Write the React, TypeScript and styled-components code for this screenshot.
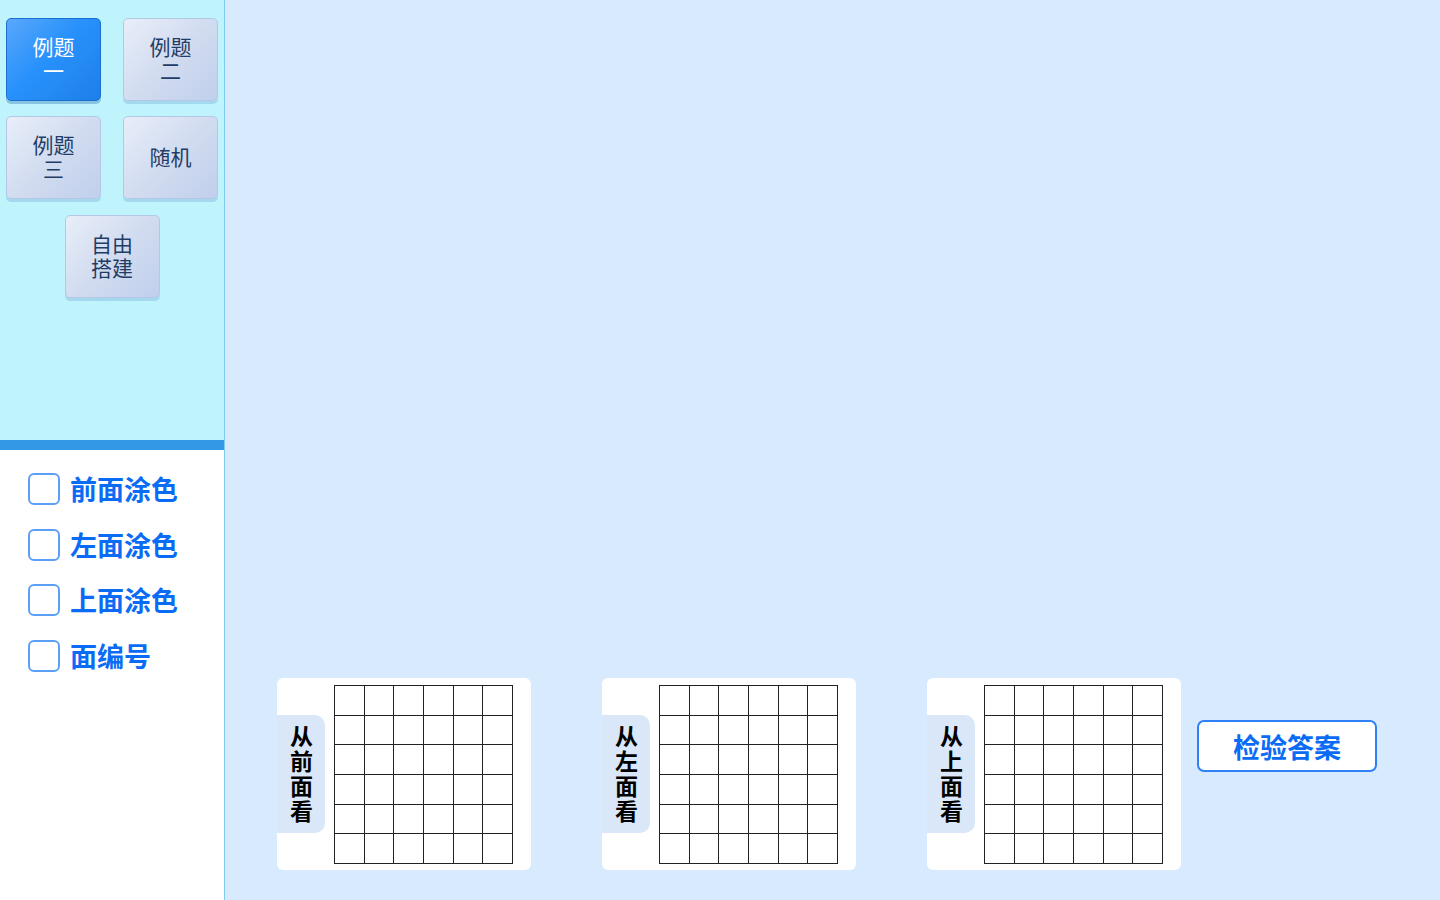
import React from "react";
import styled, { createGlobalStyle, css } from "styled-components";

const Global = createGlobalStyle`
  html, body { margin: 0; padding: 0; }
  body { font-family: "Noto Sans CJK SC", "Noto Sans", sans-serif; }
  #root { height: 100vh; }
`;

const Page = styled.div`
  display: flex;
  width: 1440px;
  height: 900px;
  overflow: hidden;
`;

const Sidebar = styled.aside`
  width: 224px;
  border-right: 1px solid #7fcdee;
  display: flex;
  flex-direction: column;
  background: #ffffff;
`;

const TopPanel = styled.div`
  height: 440px;
  box-sizing: border-box;
  background: #c0f4fc;
  padding: 18px 6px 0;
  display: grid;
  grid-template-columns: 95px 95px;
  column-gap: 22px;
  row-gap: 15px;
  align-content: start;
`;

const Divider = styled.div`
  height: 10px;
  background: #3399e6;
`;

const ExampleButton = styled.button<{ $active?: boolean; $wide?: boolean }>`
  width: 95px;
  height: 83px;
  box-sizing: border-box;
  border-radius: 5px;
  font-family: inherit;
  font-size: 21px;
  line-height: 24px;
  padding: 0 0 3px;
  cursor: pointer;
  display: flex;
  align-items: center;
  justify-content: center;
  text-align: center;
  white-space: pre-line;
  ${(p) =>
    p.$active
      ? css`
          color: #ffffff;
          background: linear-gradient(135deg, #5aa8fb 0%, #2891fb 45%, #1e7fe9 100%);
          border: 1px solid #1a6fd0;
          box-shadow: 0 3px 0 #86c4e2;
        `
      : css`
          color: #1f3d66;
          background: linear-gradient(135deg, #e8eef9 0%, #d2dcf0 50%, #c0cfec 100%);
          border: 1px solid #b4c8e6;
          box-shadow: 0 3px 0 #a3d8ee;
        `}
  ${(p) =>
    p.$wide &&
    css`
      grid-column: 1 / span 2;
      justify-self: center;
      margin-top: 1px;
    `}
`;

const Options = styled.div`
  padding: 23px 0 0 28px;
  display: flex;
  flex-direction: column;
  gap: 23.6px;
`;

const OptionRow = styled.label`
  display: flex;
  align-items: center;
  gap: 10px;
  height: 32px;
  cursor: pointer;
`;

const Box = styled.span`
  width: 32px;
  height: 32px;
  box-sizing: border-box;
  border: 2px solid #5b9ff8;
  border-radius: 6px;
  background: #ffffff;
`;

const OptionText = styled.span`
  font-size: 27px;
  font-weight: 700;
  color: #0a6cf5;
  line-height: 32px;
`;

const Main = styled.main`
  flex: 1;
  background: #d8eafe;
  display: flex;
  flex-direction: column;
  justify-content: flex-end;
  padding: 0 0 30px 52px;
`;

const CardRow = styled.div`
  display: flex;
  align-items: flex-start;
  gap: 71px;
`;

const Card = styled.div`
  width: 254px;
  height: 192px;
  box-sizing: border-box;
  background: #ffffff;
  border-radius: 6px;
  display: flex;
  align-items: flex-start;
  padding-top: 7px;
`;

const Tab = styled.div`
  width: 48px;
  height: 118px;
  margin-top: 30px;
  background: #d9e7f8;
  border-radius: 0 10px 10px 0;
  display: flex;
  align-items: center;
  justify-content: center;
`;

const TabText = styled.span`
  writing-mode: vertical-rl;
  text-orientation: upright;
  font-size: 23px;
  font-weight: 700;
  letter-spacing: 2px;
  line-height: 1;
  color: #000;
  margin-top: 2px;
`;

const Grid = styled.div`
  margin-left: 9px;
  width: 179px;
  height: 179px;
  box-sizing: border-box;
  border-left: 1px solid #222;
  border-top: 1px solid #222;
  display: grid;
  grid-template-columns: repeat(6, 1fr);
  grid-template-rows: repeat(6, 1fr);
`;

const Cell = styled.div`
  border-right: 1px solid #222;
  border-bottom: 1px solid #222;
`;

const CheckButton = styled.button`
  margin-left: -55px;
  margin-top: 42px;
  width: 180px;
  height: 52px;
  box-sizing: border-box;
  background: #ffffff;
  border: 2px solid #2f80f6;
  border-radius: 7px;
  font-family: inherit;
  font-size: 27px;
  font-weight: 700;
  color: #0a6cf5;
  padding: 0;
  cursor: pointer;
`;

const examples: { label: string; active?: boolean; wide?: boolean }[] = [
  { label: "例题\n一", active: true },
  { label: "例题\n二" },
  { label: "例题\n三" },
  { label: "随机" },
  { label: "自由\n搭建", wide: true },
];

const options = ["前面涂色", "左面涂色", "上面涂色", "面编号"];
const views = ["从前面看", "从左面看", "从上面看"];

export default function App() {
  return (
    <Page>
      <Global />
      <Sidebar>
        <TopPanel>
          {examples.map((e, i) => (
            <ExampleButton key={i} $active={e.active} $wide={e.wide}>
              {e.label}
            </ExampleButton>
          ))}
        </TopPanel>
        <Divider />
        <Options>
          {options.map((o) => (
            <OptionRow key={o}>
              <Box />
              <OptionText>{o}</OptionText>
            </OptionRow>
          ))}
        </Options>
      </Sidebar>
      <Main>
        <CardRow>
          {views.map((v) => (
            <Card key={v}>
              <Tab>
                <TabText>{v}</TabText>
              </Tab>
              <Grid>
                {Array.from({ length: 36 }).map((_, i) => (
                  <Cell key={i} />
                ))}
              </Grid>
            </Card>
          ))}
          <CheckButton>检验答案</CheckButton>
        </CardRow>
      </Main>
    </Page>
  );
}
